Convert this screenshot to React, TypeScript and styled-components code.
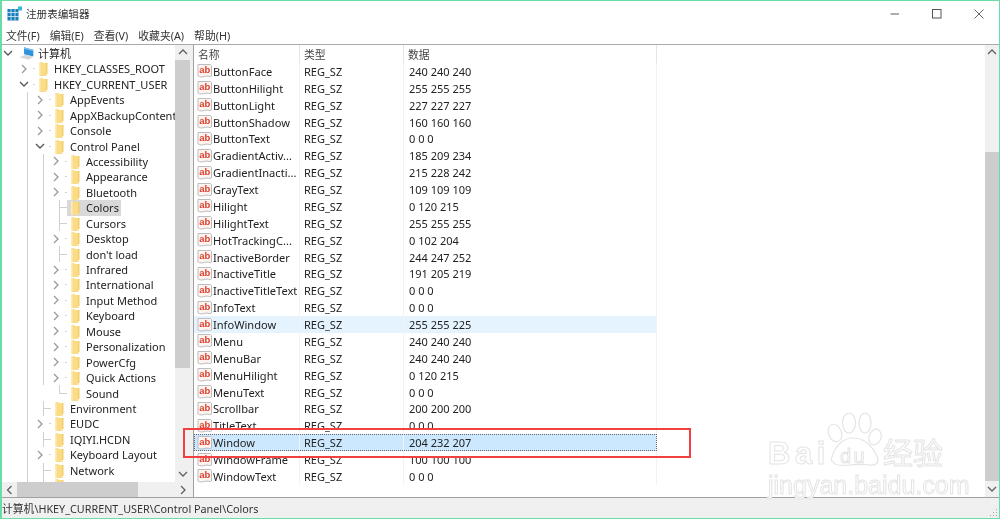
import React from 'react';
import styled, {createGlobalStyle} from 'styled-components';

const TREE_ROW = 15.44;
const LIST_ROW = 16.875;
const FONT = `"Noto Sans", "Noto Sans CJK SC", sans-serif`;

type TreeItem = {
  label: string;
  depth: number;
  state: 'open' | 'closed' | 'leaf' | 'last';
  guides?: number[];
  selected?: boolean;
};

const d2 = [1];
const d3 = [1, 2];

const TREE_DATA: TreeItem[] = [
  {label: '计算机', depth: 0, state: 'open'},
  {label: 'HKEY_CLASSES_ROOT', depth: 1, state: 'closed'},
  {label: 'HKEY_CURRENT_USER', depth: 1, state: 'open'},
  {label: 'AppEvents', depth: 2, state: 'closed', guides: d2},
  {label: 'AppXBackupContentType', depth: 2, state: 'closed', guides: d2},
  {label: 'Console', depth: 2, state: 'closed', guides: d2},
  {label: 'Control Panel', depth: 2, state: 'open', guides: d2},
  {label: 'Accessibility', depth: 3, state: 'closed', guides: d3},
  {label: 'Appearance', depth: 3, state: 'closed', guides: d3},
  {label: 'Bluetooth', depth: 3, state: 'closed', guides: d3},
  {label: 'Colors', depth: 3, state: 'leaf', guides: d3, selected: true},
  {label: 'Cursors', depth: 3, state: 'leaf', guides: d3},
  {label: 'Desktop', depth: 3, state: 'closed', guides: d3},
  {label: "don't load", depth: 3, state: 'leaf', guides: d3},
  {label: 'Infrared', depth: 3, state: 'closed', guides: d3},
  {label: 'International', depth: 3, state: 'closed', guides: d3},
  {label: 'Input Method', depth: 3, state: 'closed', guides: d3},
  {label: 'Keyboard', depth: 3, state: 'closed', guides: d3},
  {label: 'Mouse', depth: 3, state: 'closed', guides: d3},
  {label: 'Personalization', depth: 3, state: 'closed', guides: d3},
  {label: 'PowerCfg', depth: 3, state: 'closed', guides: d3},
  {label: 'Quick Actions', depth: 3, state: 'closed', guides: d3},
  {label: 'Sound', depth: 3, state: 'last', guides: d2},
  {label: 'Environment', depth: 2, state: 'leaf', guides: d2},
  {label: 'EUDC', depth: 2, state: 'closed', guides: d2},
  {label: 'IQIYI.HCDN', depth: 2, state: 'leaf', guides: d2},
  {label: 'Keyboard Layout', depth: 2, state: 'closed', guides: d2},
  {label: 'Network', depth: 2, state: 'leaf', guides: d2},
  {label: '', depth: 2, state: 'leaf', guides: d2},
];

const VALUES: [string, string, string?][] = [
  ['ButtonFace', '240 240 240'],
  ['ButtonHilight', '255 255 255'],
  ['ButtonLight', '227 227 227'],
  ['ButtonShadow', '160 160 160'],
  ['ButtonText', '0 0 0'],
  ['GradientActiv...', '185 209 234'],
  ['GradientInacti...', '215 228 242'],
  ['GrayText', '109 109 109'],
  ['Hilight', '0 120 215'],
  ['HilightText', '255 255 255'],
  ['HotTrackingC...', '0 102 204'],
  ['InactiveBorder', '244 247 252'],
  ['InactiveTitle', '191 205 219'],
  ['InactiveTitleText', '0 0 0'],
  ['InfoText', '0 0 0'],
  ['InfoWindow', '255 255 225', 'hot'],
  ['Menu', '240 240 240'],
  ['MenuBar', '240 240 240'],
  ['MenuHilight', '0 120 215'],
  ['MenuText', '0 0 0'],
  ['Scrollbar', '200 200 200'],
  ['TitleText', '0 0 0'],
  ['Window', '204 232 207', 'selected'],
  ['WindowFrame', '100 100 100'],
  ['WindowText', '0 0 0'],
];

const GlobalStyle = createGlobalStyle`
  html, body {
    margin: 0;
    padding: 0;
    background: #fff;
  }
`;

const Frame = styled.div`
  position: relative;
  display: flex;
  flex-direction: column;
  width: 1000px;
  height: 519px;
  box-sizing: border-box;
  border: solid #6ddba6;
  border-width: 1.5px 1px 1.5px 2px;
  background: #fff;
  overflow: hidden;
  font-family: ${FONT};
  font-size: 11px;
  color: #222;
  filter: blur(0.3px);
`;

const TitleBar = styled.div`
  display: flex;
  align-items: center;
  height: 25px;
  padding-left: 5px;
  flex: none;
`;

const TitleText = styled.span`
  margin-left: 3px;
  font-size: 10.6px;
  color: #333;
`;

const WindowButtons = styled.div`
  display: flex;
  margin-left: auto;
  padding-right: 15px;
  gap: 32px;
`;

const MenuBar = styled.div`
  display: flex;
  align-items: center;
  height: 18px;
  padding-left: 4px;
  gap: 10px;
  flex: none;
  border-bottom: 1px solid #a9a9b0;
`;

const MenuItem = styled.span`
  font-size: 10.8px;
  color: #333;
`;

const Main = styled.div`
  display: flex;
  flex: 1;
  min-height: 0;
`;

const TreePane = styled.div`
  display: flex;
  flex-direction: column;
  width: 188px;
  flex: none;
`;

const TreeBody = styled.div`
  display: flex;
  flex: 1;
  min-height: 0;
`;

const TreeRows = styled.div`
  flex: 1;
  min-width: 0;
  overflow: hidden;
  padding: 0.7px 0 0 1px;
`;

const TreeRow = styled.div`
  display: flex;
  align-items: center;
  height: ${TREE_ROW}px;
  white-space: nowrap;
`;

const IndentCell = styled.span<{$line?: boolean}>`
  display: block;
  flex: none;
  width: 16px;
  height: 100%;
  background: ${(p) =>
    p.$line
      ? 'linear-gradient(#d0d0d0, #d0d0d0) 8px 0 / 1px 100% no-repeat'
      : 'none'};
`;

const ExpanderCell = styled(IndentCell)<{$state: TreeItem['state']; $root?: boolean}>`
  display: flex;
  align-items: center;
  background: ${(p) => {
    if (p.$root) return 'none';
    const dash = 'linear-gradient(#d0d0d0, #d0d0d0) 8px 50% / 10px 1px no-repeat';
    const shortDash = 'linear-gradient(#d0d0d0, #d0d0d0) 14px 50% / 3px 1px no-repeat';
    if (p.$state === 'leaf')
      return `${dash}, linear-gradient(#d0d0d0, #d0d0d0) 8px 0 / 1px 100% no-repeat`;
    if (p.$state === 'last')
      return `${dash}, linear-gradient(#d0d0d0, #d0d0d0) 8px 0 / 1px 50% no-repeat`;
    return shortDash;
  }};
`;

const NodeLabel = styled.span<{$selected?: boolean}>`
  display: flex;
  align-items: center;
  height: 100%;
  padding-right: 2px;
  background: ${(p) => (p.$selected ? '#d9d9d9' : 'transparent')};
`;

const NodeIcon = styled.span`
  display: flex;
  align-items: center;
  justify-content: center;
  width: 16px;
  height: 100%;
  margin-right: 3px;
`;

const VScroll = styled.div<{$width: number}>`
  display: flex;
  flex-direction: column;
  flex: none;
  width: ${(p) => p.$width}px;
  background: #f0f0f0;
`;

const ScrollArrow = styled.div`
  display: flex;
  align-items: center;
  justify-content: center;
  flex: none;
  width: 100%;
  height: 15px;
`;

const ScrollGap = styled.div<{$size: number}>`
  flex: none;
  height: ${(p) => p.$size}px;
`;

const VThumb = styled.div<{$size: number}>`
  flex: none;
  height: ${(p) => p.$size}px;
  background: #cdcdcd;
`;

const HScroll = styled.div`
  display: flex;
  align-items: center;
  flex: none;
  height: 15px;
  background: #f0f0f0;
`;

const HArrow = styled.div`
  display: flex;
  align-items: center;
  justify-content: center;
  flex: none;
  width: 15px;
  height: 100%;
`;

const HThumb = styled.div`
  width: 121px;
  height: 100%;
  background: #cdcdcd;
`;

const HSpacer = styled.div`
  flex: 1;
`;

const Splitter = styled.div`
  flex: none;
  width: 3px;
  background: #f0f0f0;
  border-right: 1px solid #a0a0a0;
  box-sizing: content-box;
`;

const ListPane = styled.div`
  position: relative;
  display: flex;
  flex: 1;
  min-width: 0;
`;

const ListBody = styled.div`
  flex: 1;
  min-width: 0;
`;

const ListHeader = styled.div`
  display: grid;
  grid-template-columns: 106px 104px 253px;
  height: 18px;
`;

const ListRow = styled.div<{$kind?: string}>`
  display: grid;
  grid-template-columns: 106px 104px 253px;
  width: 463px;
  height: ${LIST_ROW}px;
  box-sizing: border-box;
  align-items: center;
  background: ${(p) =>
    p.$kind === 'selected' ? '#cce8ff' : p.$kind === 'hot' ? '#e5f3ff' : 'transparent'};
  outline: ${(p) => (p.$kind === 'selected' ? '1px dotted #667' : 'none')};
  outline-offset: -1px;
`;

const HeadCell = styled.div`
  display: flex;
  align-items: center;
  padding-left: 4px;
  font-size: 10.8px;
  color: #444;
  border-right: 1px solid #e5e5e5;
`;

const Cell = styled.div<{$first?: boolean}>`
  display: flex;
  align-items: center;
  height: 100%;
  padding-left: ${(p) => (p.$first ? '3px' : '4px')};
  white-space: nowrap;
  border-right: 1px solid #f2f2f2;
  font-size: ${(p) => (p.$first ? '11.1px' : '11px')};
`;

const DataCell = styled(Cell)`
  padding-left: 5px;
`;

const StatusBar = styled.div`
  display: flex;
  align-items: center;
  justify-content: space-between;
  flex: none;
  height: 21px;
  box-sizing: border-box;
  border-top: 1px solid #a0a0a0;
  background: #f0f0f0;
  font-size: 10.8px;
  color: #333;
`;

const Grip = styled.svg`
  flex: none;
  margin: 7px 1px 0 0;
`;

const RedBox = styled.div`
  position: absolute;
  left: 181px;
  top: 426.5px;
  width: 504px;
  height: 26px;
  border: 2px solid #f04040;
`;

const Watermark = styled.div`
  position: absolute;
  right: 53px;
  top: 366px;
  width: 180px;
  height: 88px;
  pointer-events: none;
`;

const WaterText = styled.span<{$x: number; $y: number; $size: number; $bold?: boolean; $track?: number}>`
  position: absolute;
  left: ${(p) => p.$x}px;
  top: ${(p) => p.$y}px;
  font-family: "Liberation Sans", "Noto Sans CJK SC", sans-serif;
  font-size: ${(p) => p.$size}px;
  font-weight: ${(p) => (p.$bold ? 700 : 400)};
  letter-spacing: ${(p) => p.$track ?? 0}px;
  line-height: 1;
  white-space: nowrap;
  color: #fff;
  -webkit-text-stroke: 1px #e4e4e4;
`;

const AppIcon = () => (
  <svg width="16" height="15" viewBox="0 0 16 15">
    <rect x="0.5" y="3" width="11" height="11.5" fill="#1a7fb8" />
    <path d="M0.5 6.5h11M0.5 10.5h11M4 3v11.5M8 3v11.5" stroke="#dff1fb" strokeWidth="0.8" />
    <rect x="11" y="0.5" width="4" height="4" fill="#35b7d9" />
  </svg>
);

const Minimize = () => (
  <svg width="10" height="10" viewBox="0 0 10 10">
    <path d="M0.5 5h8.5" stroke="#777" strokeWidth="1.2" />
  </svg>
);

const Maximize = () => (
  <svg width="10" height="10" viewBox="0 0 10 10">
    <rect x="0.5" y="0.5" width="8.5" height="8.5" fill="none" stroke="#555" />
  </svg>
);

const Close = () => (
  <svg width="10" height="10" viewBox="0 0 10 10">
    <path d="M0.5 0.5l9 9M9.5 0.5l-9 9" stroke="#555" strokeWidth="0.9" />
  </svg>
);

const Chevron = ({dir, color = '#9a9a9a'}: {dir: 'up' | 'down' | 'left' | 'right'; color?: string}) => {
  const paths = {
    up: 'M1 6l4-4 4 4',
    down: 'M1 3l4 4 4-4',
    left: 'M6.5 1l-4 4 4 4',
    right: 'M3 1l4 4-4 4',
  };
  return (
    <svg width="10" height="10" viewBox="0 0 10 10">
      <path d={paths[dir]} fill="none" stroke={color} strokeWidth="1.3" />
    </svg>
  );
};

const Folder = () => (
  <svg width="12" height="15" viewBox="0 0 12 15">
    <path d="M2 1h3l1 1h3.5v13H2z" fill="#fbdc86" />
    <path d="M9 2h1.5v11H9z" fill="#f5cc6a" />
    <path d="M2 1h1.5v14H2z" fill="#fdebb5" />
  </svg>
);

const Computer = () => (
  <svg width="19" height="17" viewBox="0 0 19 17">
    <path d="M6 1l11 3v8L6 9.5z" fill="#2f93dc" />
    <path d="M6 1l11 3v1.5L6 3z" fill="#86c5ef" />
    <path d="M0.5 13l7-3 10 2.5-6 3.5z" fill="#d5d8db" />
  </svg>
);

const StringIcon = () => (
  <svg width="16" height="16" viewBox="0 0 16 16" style={{flex: 'none'}}>
    <path
      d="M1 1.5h12.5l1 1v10.5c-2 1.4-3.6-.6-6.5.3-2.4.8-5 1-7-.3z"
      fill="#fdf4f2"
      stroke="#bdbdbd"
    />
    <text
      x="7.8"
      y="9.8"
      textAnchor="middle"
      fontFamily="Liberation Sans, sans-serif"
      fontWeight="700"
      fontSize="9.5"
      fill="#dd3f2a"
    >
      ab
    </text>
  </svg>
);

const VBar = ({width, top, size, after}: {width: number; top: number; size: number; after: number}) => (
  <VScroll $width={width}>
    <ScrollArrow>
      <Chevron dir="up" color="#606060" />
    </ScrollArrow>
    <ScrollGap $size={top} />
    <VThumb $size={size} />
    <ScrollGap $size={after} />
    <ScrollArrow>
      <Chevron dir="down" color="#606060" />
    </ScrollArrow>
  </VScroll>
);

const App: React.FC = () => {
  return (
    <Frame>
      <GlobalStyle />
      <TitleBar>
        <AppIcon />
        <TitleText>注册表编辑器</TitleText>
        <WindowButtons>
          <Minimize />
          <Maximize />
          <Close />
        </WindowButtons>
      </TitleBar>
      <MenuBar>
        <MenuItem>文件(F)</MenuItem>
        <MenuItem>编辑(E)</MenuItem>
        <MenuItem>查看(V)</MenuItem>
        <MenuItem>收藏夹(A)</MenuItem>
        <MenuItem>帮助(H)</MenuItem>
      </MenuBar>
      <Main>
        <TreePane>
          <TreeBody>
            <TreeRows>
              {TREE_DATA.map((item, i) => (
                <TreeRow key={i}>
                  {Array.from({length: item.depth}).map((_, level) => (
                    <IndentCell key={level} $line={(item.guides ?? []).includes(level)} />
                  ))}
                  <ExpanderCell $state={item.state} $root={item.depth === 0}>
                    {item.state === 'open' && <Chevron dir="down" color="#555" />}
                    {item.state === 'closed' && <Chevron dir="right" />}
                  </ExpanderCell>
                  <NodeLabel $selected={item.selected}>
                    <NodeIcon>{item.depth === 0 ? <Computer /> : <Folder />}</NodeIcon>
                    {item.label}
                  </NodeLabel>
                </TreeRow>
              ))}
            </TreeRows>
            <VBar width={15} top={0} size={308} after={98} />
          </TreeBody>
          <HScroll>
            <HArrow>
              <Chevron dir="left" color="#606060" />
            </HArrow>
            <HThumb />
            <HSpacer />
            <HArrow>
              <Chevron dir="right" color="#606060" />
            </HArrow>
          </HScroll>
        </TreePane>
        <Splitter />
        <ListPane>
          <ListBody>
            <ListHeader>
              <HeadCell>名称</HeadCell>
              <HeadCell>类型</HeadCell>
              <HeadCell>数据</HeadCell>
            </ListHeader>
            {VALUES.map(([name, data, kind]) => (
              <ListRow key={name} $kind={kind}>
                <Cell $first>
                  <StringIcon />
                  {name}
                </Cell>
                <Cell>REG_SZ</Cell>
                <DataCell>{data}</DataCell>
              </ListRow>
            ))}
          </ListBody>
          <VBar width={14} top={92} size={329} after={0} />
          <Watermark>
            <svg width="180" height="88" viewBox="0 0 180 88">
              <g fill="#fff" stroke="#e4e4e4" strokeWidth="1.2">
                <ellipse cx="69" cy="22" rx="6.5" ry="9" transform="rotate(-20 69 22)" />
                <ellipse cx="83" cy="12" rx="6.5" ry="10" />
                <ellipse cx="99" cy="12" rx="6" ry="10" />
                <ellipse cx="109" cy="26" rx="6" ry="8" transform="rotate(20 109 26)" />
                <path d="M66 46c3-11 11-19 21-19 11 0 19 8 24 18 3 7-1 10-8 9-7-1-12-1-19 0-8 1-15 0-17-3-2-1-2-3-1-5z" />
              </g>
            </svg>
            <WaterText $x={2} $y={27} $size={31} $bold $track={4.5}>Bai</WaterText>
            <WaterText $x={74} $y={35} $size={20} $track={2.5}>du</WaterText>
            <WaterText $x={117} $y={28} $size={30}>经验</WaterText>
            <WaterText $x={2} $y={62} $size={25}>jingyan.baidu.com</WaterText>
          </Watermark>
        </ListPane>
      </Main>
      <StatusBar>
        计算机\HKEY_CURRENT_USER\Control Panel\Colors
        <Grip width="10" height="10" viewBox="0 0 10 10">
          <path d="M8 2h1v1H8zM5 5h1v1H5zM8 5h1v1H8zM2 8h1v1H2zM5 8h1v1H5zM8 8h1v1H8z" fill="#a8a8a8" />
        </Grip>
      </StatusBar>
      <RedBox />
    </Frame>
  );
};

export default App;
